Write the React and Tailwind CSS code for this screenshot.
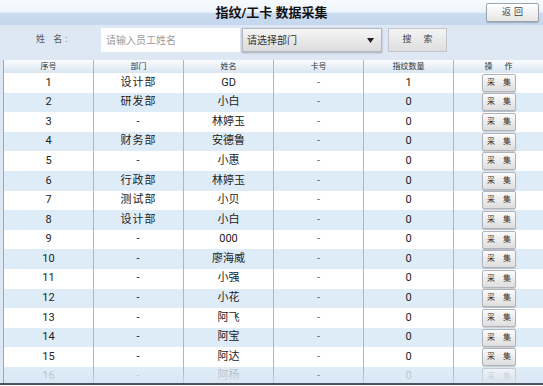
import React from "react";

const rows = [
  ["1", "设计部", "GD", "-", "1"],
  ["2", "研发部", "小白", "-", "0"],
  ["3", "-", "林婷玉", "-", "0"],
  ["4", "财务部", "安德鲁", "-", "0"],
  ["5", "-", "小惠", "-", "0"],
  ["6", "行政部", "林婷玉", "-", "0"],
  ["7", "测试部", "小贝", "-", "0"],
  ["8", "设计部", "小白", "-", "0"],
  ["9", "-", "000", "-", "0"],
  ["10", "-", "廖海威", "-", "0"],
  ["11", "-", "小强", "-", "0"],
  ["12", "-", "小花", "-", "0"],
  ["13", "-", "阿飞", "-", "0"],
  ["14", "-", "阿宝", "-", "0"],
  ["15", "-", "阿达", "-", "0"],
  ["16", "-", "阿杨", "-", "0"],
];

const cellBase = "flex items-center justify-center border-r border-[#a9b6c4] whitespace-nowrap";

export default function App() {
  return (
    <div
      className="w-[543px] h-[386px] overflow-hidden flex flex-col bg-[#dde8f4] text-[#222]"
      style={{ fontFamily: '"Roboto", "Noto Sans CJK SC", sans-serif' }}
    >
      {/* Title bar */}
      <div className="relative h-[25px] shrink-0 flex items-center justify-center bg-[linear-gradient(to_bottom,#f8fbfe_0%,#eef4fb_48%,#cbdcf0_54%,#c4d7ee_100%)]">
        <span className="text-[13px] font-bold text-[#111] leading-none whitespace-nowrap">指纹/工卡 数据采集</span>
        <div className="absolute right-[4px] top-[3px] w-[53px] h-[19px] flex items-center justify-center rounded-[2px] border border-[#9ea4ab] bg-[linear-gradient(to_bottom,#ffffff,#e6e6e6)] text-[9px] text-[#444] tracking-[3px] pl-[3px] whitespace-nowrap shadow-[0_1px_1px_rgba(0,0,0,0.2)]">
          返回
        </div>
      </div>

      {/* Search row */}
      <div className="h-[35px] shrink-0 flex items-start pt-[3px]">
        <div className="w-[101px] h-[24px] flex items-center pl-[36px] text-[9px] text-[#555] tracking-[3px] whitespace-nowrap">
          姓 名:
        </div>
        <div className="w-[139px] h-[24px] bg-white flex items-center pl-[5px] text-[10px] text-[#9a9a9a] whitespace-nowrap">
          请输入员工姓名
        </div>
        <div className="ml-[2px] w-[140px] h-[24px] flex items-center justify-between pl-[4px] pr-[7px] border border-[#b3b8bf] bg-[linear-gradient(to_bottom,#f6f6f6,#dcdcdc)] shadow-[0_1px_2px_rgba(0,0,0,0.25)] text-[10px] text-[#333] whitespace-nowrap">
          <span>请选择部门</span>
          <svg width="7" height="5" viewBox="0 0 7 5"><path d="M0 0h7L3.5 5z" fill="#222" /></svg>
        </div>
        <div className="ml-[6px] w-[59px] h-[24px] flex items-center justify-center border border-[#c2c6cc] bg-[linear-gradient(to_bottom,#f4f4f4,#dedede)] text-[9px] text-[#444] tracking-[5px] pl-[5px] whitespace-nowrap">
          搜 索
        </div>
      </div>

      {/* Table */}
      <div className="relative flex-1 overflow-hidden ml-[3px] border-l border-[#9aa7b5]">
        <div className="h-[13px] flex text-[8px] text-[#333] bg-[linear-gradient(to_bottom,#fbfcfe,#d9e5f2)]">
          <div className={`${cellBase} w-[90px]`}>序号</div>
          <div className={`${cellBase} w-[90px]`}>部门</div>
          <div className={`${cellBase} w-[90px]`}>姓名</div>
          <div className={`${cellBase} w-[90px]`}>卡号</div>
          <div className={`${cellBase} w-[90px]`}>指纹数量</div>
          <div className="flex-1 flex items-center justify-center tracking-[5px] pl-[5px] whitespace-nowrap">操 作</div>
        </div>
        {rows.map((r, i) => (
          <div
            key={r[0]}
            className={`h-[19.6px] flex text-[11px] ${i % 2 === 0 ? "bg-white" : "bg-[#deecf8]"} ${i === 15 ? "text-[#b5bcc4]" : ""}`}
          >
            <div className={`${cellBase} w-[90px]`}>{r[0]}</div>
            <div className={`${cellBase} w-[90px] tracking-[1px]`}>{r[1]}</div>
            <div className={`${cellBase} w-[90px]`}>{r[2]}</div>
            <div className={`${cellBase} w-[90px] text-[#666]`}>{r[3]}</div>
            <div className={`${cellBase} w-[90px]`}>{r[4]}</div>
            <div className="flex-1 flex items-center pl-[28px]">
              <div
                className={`w-[34px] h-[18px] flex items-center justify-center rounded-[2px] border border-[#b0b4ba] bg-[linear-gradient(to_bottom,#fbfbfb,#dedede)] text-[8px] tracking-[3px] pl-[3px] whitespace-nowrap shadow-[0_1px_1px_rgba(0,0,0,0.2)] ${i === 15 ? "text-[#bbb] opacity-60" : "text-[#333]"}`}
              >
                采 集
              </div>
            </div>
          </div>
        ))}
        <div className="absolute left-0 right-0 bottom-0 h-[14px] bg-[linear-gradient(to_bottom,rgba(222,236,248,0),rgba(215,228,242,0.6))]" />
      </div>
      <div className="h-[2px] shrink-0 bg-[#4b5463]" />
      <div className="h-[1px] shrink-0 bg-white" />
    </div>
  );
}
